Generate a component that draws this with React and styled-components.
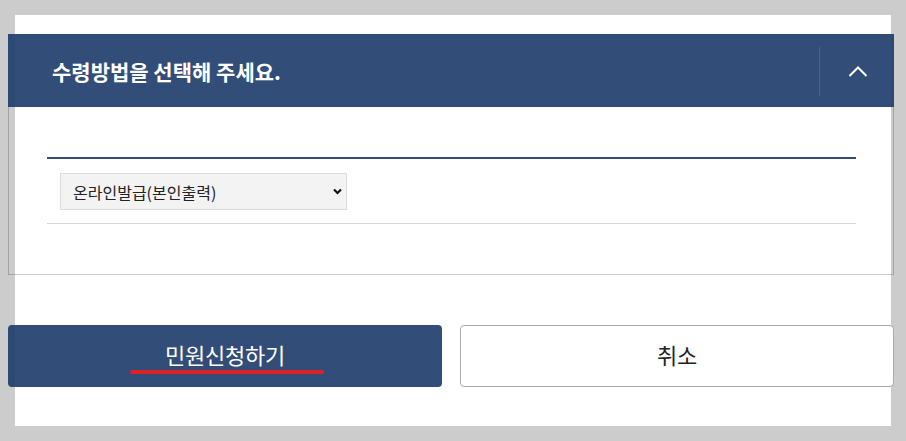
import React, { useState } from "react";
import styled, { createGlobalStyle } from "styled-components";

const GlobalStyle = createGlobalStyle`
  html, body {
    margin: 0;
    background: #cccccc;
    font-family: "Noto Sans CJK KR", "Noto Sans", sans-serif;
  }
`;

function ChevronUp() {
  return (
    <svg width="20" height="12" viewBox="0 0 20 12" fill="none">
      <path d="M1.5 11L10 2.5L18.5 11" stroke="#fff" strokeWidth="2" />
    </svg>
  );
}

function ChevronDown() {
  return (
    <svg width="9" height="7" viewBox="0 0 9 7" fill="none">
      <path d="M1 1.5L4.5 5L8 1.5" stroke="#111" strokeWidth="2.2" />
    </svg>
  );
}

function App() {
  const [open, setOpen] = useState(true);
  const [method, setMethod] = useState("online");

  return (
    <>
      <GlobalStyle />
      <Panel>
        <Inner>
          <Header>
            <Title>수령방법을 선택해 주세요.</Title>
            <Toggle onClick={() => setOpen(!open)} aria-label="접기">
              <ChevronUp />
            </Toggle>
          </Header>
          <Box>
            <Field>
              <SelectWrap>
                <Select
                  value={method}
                  onChange={(event) => setMethod(event.target.value)}
                >
                  <option value="online">온라인발급(본인출력)</option>
                  <option value="post">우편수령</option>
                  <option value="visit">방문수령</option>
                </Select>
                <Caret>
                  <ChevronDown />
                </Caret>
              </SelectWrap>
            </Field>
          </Box>
          <Actions>
            <ActionButton primary>
              민원신청하기
              <Mark />
            </ActionButton>
            <ActionButton>취소</ActionButton>
          </Actions>
        </Inner>
      </Panel>
    </>
  );
}

export default App;

const Panel = styled.div`
  margin: 15px;
  width: 876px;
  height: 411px;
  background: #ffffff;
  padding-top: 19px;
  box-sizing: border-box;
`;

const Inner = styled.div`
  margin: 0 -3px 0 -7px;
`;

const Header = styled.div`
  height: 73px;
  display: flex;
  align-items: center;
  background: rgba(29, 58, 106, 0.9);
  padding-left: 44px;
`;

const Title = styled.h2`
  flex: 1;
  margin: 0;
  color: #ffffff;
  font-size: 21px;
  font-weight: 700;
  letter-spacing: 0;
`;

const Toggle = styled.button`
  width: 75px;
  height: 49px;
  margin-top: 1px;
  display: flex;
  align-items: center;
  justify-content: center;
  padding: 0 0 0 2px;
  background: none;
  border: none;
  border-left: 1px solid rgba(255, 255, 255, 0.12);
  cursor: pointer;
`;

const Box = styled.div`
  border: 1px solid rgba(0, 0, 0, 0.2);
  border-top: none;
  padding: 50px 37px 50px 38px;
`;

const Field = styled.div`
  border-top: 2px solid #344e79;
  border-bottom: 1px solid #d6d6d6;
  padding: 14px 13px 13px;
`;

const SelectWrap = styled.div`
  position: relative;
  width: 287px;
`;

const Select = styled.select`
  appearance: none;
  display: block;
  width: 100%;
  height: 37px;
  background: #f3f3f3;
  border: 1px solid #dcdcdc;
  border-radius: 0;
  padding: 0 30px 0 12px;
  font-family: "Noto Sans CJK KR", "Noto Sans", sans-serif;
  font-size: 16px;
  color: #222222;
  outline: none;
`;

const Caret = styled.span`
  position: absolute;
  right: 5px;
  top: 15px;
  display: flex;
  pointer-events: none;
`;

const Actions = styled.div`
  display: grid;
  grid-template-columns: 434px 434px;
  gap: 18px;
  margin-top: 50px;
`;

const ActionButton = styled.button`
  position: relative;
  height: 62px;
  border-radius: 4px;
  font-family: "Noto Sans CJK KR", "Noto Sans", sans-serif;
  font-size: 22px;
  letter-spacing: -0.2px;
  cursor: pointer;
  background: ${(p) => (p.primary ? "rgba(29, 58, 106, 0.9)" : "#ffffff")};
  color: ${(p) => (p.primary ? "#ffffff" : "#222222")};
  border: ${(p) => (p.primary ? "none" : "1px solid #aaaaaa")};
  padding: 0 0 4px;
`;

const Mark = styled.span`
  position: absolute;
  left: 122px;
  top: 45px;
  width: 194px;
  height: 4px;
  border-radius: 2px;
  background: #dc2227;
`;
